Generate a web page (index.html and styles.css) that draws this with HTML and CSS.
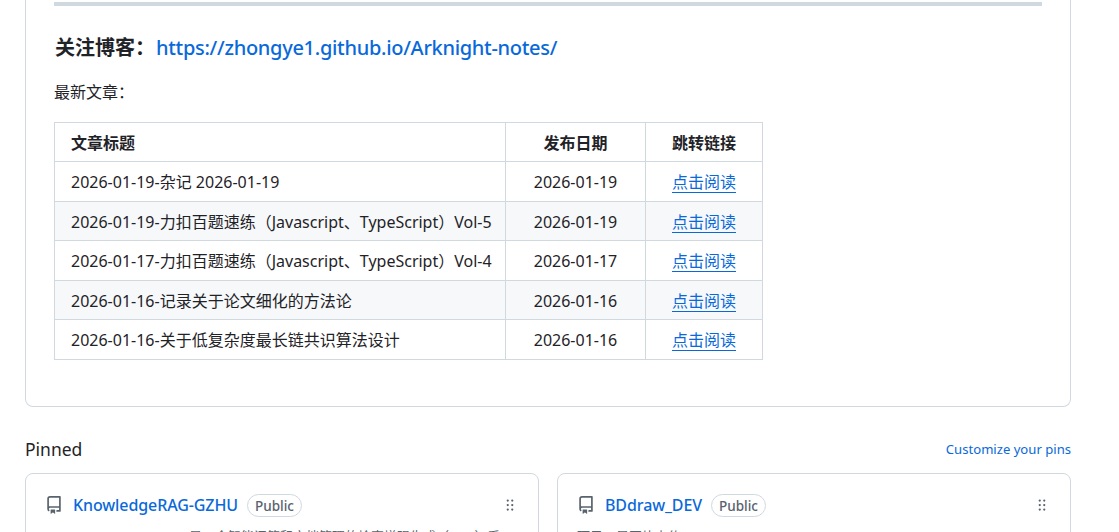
FILE: index.html
```html
<!DOCTYPE html>
<html lang="zh">
<head>
<meta charset="utf-8">
<title>Profile</title>
<link rel="stylesheet" href="styles.css">
</head>
<body>
<main class="page">
  <section class="readme">
    <hr class="rule">
    <h3 class="blog"><span>关注博客：</span><a href="#">https://zhongye1.github.io/Arknight-notes/</a></h3>
    <p class="latest">最新文章：</p>
    <table class="posts">
      <thead>
        <tr><th class="c-title">文章标题</th><th class="c-date">发布日期</th><th class="c-link">跳转链接</th></tr>
      </thead>
      <tbody>
        <tr><td>2026-01-19-杂记 2026-01-19</td><td class="mid">2026-01-19</td><td class="mid"><a href="#">点击阅读</a></td></tr>
        <tr><td>2026-01-19-力扣百题速练（Javascript、TypeScript）Vol-5</td><td class="mid">2026-01-19</td><td class="mid"><a href="#">点击阅读</a></td></tr>
        <tr><td>2026-01-17-力扣百题速练（Javascript、TypeScript）Vol-4</td><td class="mid">2026-01-17</td><td class="mid"><a href="#">点击阅读</a></td></tr>
        <tr><td>2026-01-16-记录关于论文细化的方法论</td><td class="mid">2026-01-16</td><td class="mid"><a href="#">点击阅读</a></td></tr>
        <tr><td>2026-01-16-关于低复杂度最长链共识算法设计</td><td class="mid">2026-01-16</td><td class="mid"><a href="#">点击阅读</a></td></tr>
      </tbody>
    </table>
  </section>
  <div class="pinned-head">
    <h2>Pinned</h2>
    <a href="#">Customize your pins</a>
  </div>
  <div class="pins">
    <article class="pin">
      <div class="pin-head">
        <svg class="repo" viewBox="0 0 16 16" width="18" height="18"><path d="M2 2.5A2.5 2.5 0 0 1 4.5 0h8.75a.75.75 0 0 1 .75.75v12.5a.75.75 0 0 1-.75.75h-2.5a.75.75 0 0 1 0-1.5h1.75v-2h-8a1 1 0 0 0-.714 1.7.75.75 0 1 1-1.072 1.05A2.495 2.495 0 0 1 2 11.5Zm10.5-1h-8a1 1 0 0 0-1 1v6.708A2.486 2.486 0 0 1 4.5 9h8ZM5 12.25a.25.25 0 0 1 .25-.25h3.5a.25.25 0 0 1 .25.25v3.25a.25.25 0 0 1-.4.2l-1.45-1.087a.249.249 0 0 0-.3 0L5.4 15.7a.25.25 0 0 1-.4-.2Z"/></svg>
        <a class="name" href="#">KnowledgeRAG-GZHU</a>
        <span class="badge">Public</span>
        <svg class="grip" viewBox="0 0 16 16" width="18" height="18"><path d="M10 13a1 1 0 1 1 0-2 1 1 0 0 1 0 2Zm0-4a1 1 0 1 1 0-2 1 1 0 0 1 0 2Zm-4 4a1 1 0 1 1 0-2 1 1 0 0 1 0 2Zm5-9a1 1 0 1 1-2 0 1 1 0 0 1 2 0ZM7 8a1 1 0 1 1-2 0 1 1 0 0 1 2 0ZM6 5a1 1 0 1 1 0-2 1 1 0 0 1 0 2Z"/></svg>
      </div>
      <p class="desc desc-a">是一个智能问答和文档管理的检索增强生成（RAG）系</p>
    </article>
    <article class="pin">
      <div class="pin-head">
        <svg class="repo" viewBox="0 0 16 16" width="18" height="18"><path d="M2 2.5A2.5 2.5 0 0 1 4.5 0h8.75a.75.75 0 0 1 .75.75v12.5a.75.75 0 0 1-.75.75h-2.5a.75.75 0 0 1 0-1.5h1.75v-2h-8a1 1 0 0 0-.714 1.7.75.75 0 1 1-1.072 1.05A2.495 2.495 0 0 1 2 11.5Zm10.5-1h-8a1 1 0 0 0-1 1v6.708A2.486 2.486 0 0 1 4.5 9h8ZM5 12.25a.25.25 0 0 1 .25-.25h3.5a.25.25 0 0 1 .25.25v3.25a.25.25 0 0 1-.4.2l-1.45-1.087a.249.249 0 0 0-.3 0L5.4 15.7a.25.25 0 0 1-.4-.2Z"/></svg>
        <a class="name" href="#">BDdraw_DEV</a>
        <span class="badge">Public</span>
        <svg class="grip" viewBox="0 0 16 16" width="18" height="18"><path d="M10 13a1 1 0 1 1 0-2 1 1 0 0 1 0 2Zm0-4a1 1 0 1 1 0-2 1 1 0 0 1 0 2Zm-4 4a1 1 0 1 1 0-2 1 1 0 0 1 0 2Zm5-9a1 1 0 1 1-2 0 1 1 0 0 1 2 0ZM7 8a1 1 0 1 1-2 0 1 1 0 0 1 2 0ZM6 5a1 1 0 1 1 0-2 1 1 0 0 1 0 2Z"/></svg>
      </div>
      <p class="desc">项目一是图片上传</p>
    </article>
  </div>
</main>
</body>
</html>
```
FILE: styles.css
```css
* { box-sizing: border-box; }
html, body { margin: 0; height: 532px; overflow: hidden; background: #fff; }
body { font-family: "Noto Sans", "Noto Sans CJK SC", sans-serif; color: #1f2328; font-size: 14px; }
a { color: #0969da; text-decoration: none; }
.page { width: 1046px; margin-left: 25px; }
.readme {
  height: 407px;
  border: 1px solid #d1d9e0;
  border-top: 0;
  border-radius: 0 0 8px 8px;
  padding: 2px 28px 0;
}
.rule { height: 4px; margin: 0; border: 0; background: #d1d9e0; }
.blog { margin: 27px 0 0; font-size: 20px; line-height: 30px; font-weight: 600; padding-left: 1px; }
.blog span { margin-right: 1px; }
.blog a { font-weight: 500; letter-spacing: -0.3px; }
.latest { margin: 17px 0 0; font-size: 16px; line-height: 24px; }
.posts { margin-top: 18px; border-collapse: collapse; font-size: 16px; line-height: 24px; table-layout: fixed; width: 708px; }
.posts th, .posts td { border: 1px solid #d1d9e0; padding: 7px 16px; font-weight: 400; text-align: left; white-space: nowrap; height: 39px; }
.posts th { font-weight: 600; padding: 8px 16px 6px; }
.posts .c-title { width: 451px; }
.posts .c-date { width: 140px; text-align: center; }
.posts .c-link { width: 117px; text-align: center; }
.posts .mid { text-align: center; }
.posts tbody tr:nth-child(odd) td { height: 40px; }
.posts tbody tr:nth-child(even) { background: #f6f8fa; }
.posts tbody tr:nth-child(even) td { padding: 8px 16px 6px; }
.posts td a { text-decoration: underline; text-underline-offset: 4px; }
.pinned-head { display: flex; justify-content: space-between; align-items: center; margin-top: 30px; height: 24px; }
.pinned-head h2 { margin: 0; font-size: 17.5px; font-weight: 400; line-height: 24px; }
.pinned-head a { font-size: 13.1px; }
.pins { display: grid; grid-template-columns: 514px 514px; column-gap: 18px; margin-top: 12px; }
.pin { height: 120px; border: 1px solid #d1d9e0; border-radius: 8px; padding: 15px 19px 0 19px; }
.pin-head { display: flex; align-items: center; height: 32px; }
.repo { fill: #59636e; flex: none; margin-right: 10px; }
.name { font-size: 16px; font-weight: 500; letter-spacing: -0.1px; }
.badge { margin-left: 9px; height: 23px; padding: 0 7px; font-size: 13.5px; line-height: 22px; font-weight: 500; color: #59636e; border: 1px solid #d1d9e0; border-radius: 12px; }
.grip { fill: #59636e; margin-left: auto; }
.desc { margin: 6px 0 0; font-size: 13px; line-height: 18px; color: #59636e; }
.desc-a { padding-left: 144px; }
```
